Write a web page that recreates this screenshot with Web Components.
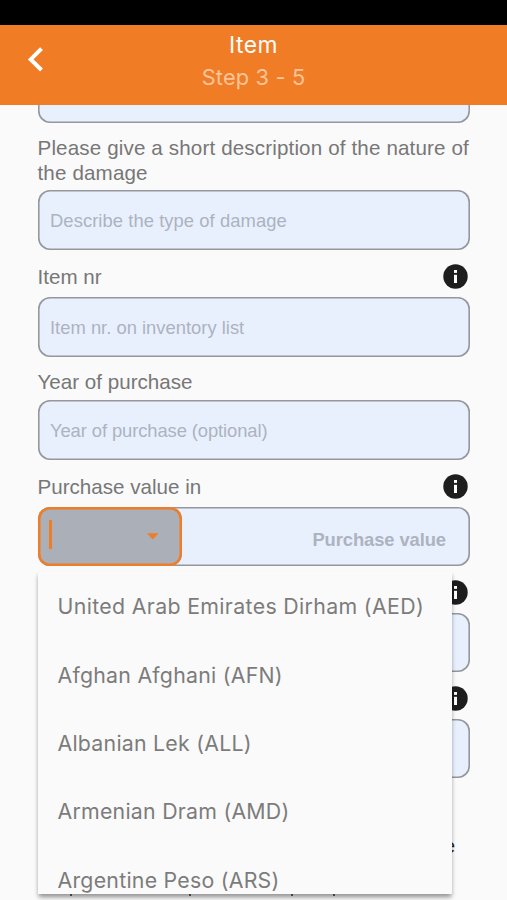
<!DOCTYPE html>
<html lang="en"><head><meta charset="utf-8"><title>Item</title>
<style>
html,body{margin:0;height:900px;overflow:hidden;background:#fafafa}
</style></head><body>
<item-page></item-page>
<script>
class AppBar extends HTMLElement{
  constructor(){super();this.attachShadow({mode:'open'}).innerHTML=`
<style>
:host{display:grid;grid-template-columns:72px 1fr 72px;height:79.5px;margin-top:25px;background:#f07d25;color:#fff;font-family:Inter,sans-serif;position:relative;z-index:3;flex:none}
svg{width:20px;height:28px;margin:20px 0 0 26px}
.t{text-align:center;font-size:22.8px;line-height:32px;padding-top:3.5px;letter-spacing:.5px}
.s{color:#fbc499;font-size:21.8px;letter-spacing:.15px}
.t div{white-space:nowrap}
</style>
<svg viewBox="0 0 20 28"><path d="M15.5 3.6L4.7 14.4L15.5 25" fill="none" stroke="#fff" stroke-width="4"/></svg>
<div class="t"><div><slot name="title"></slot></div><div class="s"><slot name="step"></slot></div></div>`}
}
customElements.define('app-bar',AppBar);

class InfoIcon extends HTMLElement{
  constructor(){super();this.attachShadow({mode:'open'}).innerHTML=`
<style>:host{display:block;width:25px;height:25px}svg{display:block}</style>
<svg width="25" height="25" viewBox="0 0 25 25"><circle cx="12.5" cy="12.5" r="12.2" fill="#1e1e1e"/><rect x="11" y="6" width="3" height="2.9" fill="#fff"/><rect x="11" y="10.8" width="3" height="8.2" fill="#fff"/></svg>`}
}
customElements.define('info-icon',InfoIcon);

class FieldLabel extends HTMLElement{
  constructor(){super();this.attachShadow({mode:'open'}).innerHTML=`
<style>
:host{display:flex;justify-content:space-between;align-items:center;height:25px;color:#777;font:20.6px/25px "Liberation Sans",Arial,sans-serif;letter-spacing:var(--ls,0)}
:host([tall]){height:50px}
info-icon{margin-right:2px;flex:none}
.w{white-space:nowrap}
</style><span class="w"><slot></slot></span>${this.hasAttribute('info')?'<info-icon></info-icon>':''}`}
}
customElements.define('field-label',FieldLabel);

class TextField extends HTMLElement{
  constructor(){super();this.attachShadow({mode:'open'}).innerHTML=`
<style>
:host{display:flex;align-items:center;box-sizing:border-box;height:60px;box-shadow:inset 0 0 0 1.6px #96979a;border-radius:12px;background:#e8f0fe;color:#adb3bf;font:18.4px/24px "Liberation Sans",Arial,sans-serif;padding:2px 12px 0 12.5px;white-space:nowrap;letter-spacing:var(--ls,0)}
:host([amount]){justify-content:flex-end;font-weight:700;padding:7px 24px 0;height:59px}
</style><slot></slot>`}
}
customElements.define('text-field',TextField);

class CurrencySelect extends HTMLElement{
  constructor(){super();this.attachShadow({mode:'open'}).innerHTML=`
<style>
:host{display:flex;align-items:center;justify-content:space-between;box-sizing:border-box;width:144px;height:59px;box-shadow:inset 0 0 0 2.5px #ee7d28;border-radius:12px;background:#abafb8;padding:0 23px 0 11.5px}
i{width:2.5px;height:29px;background:#ee7d28;margin-top:-4px}
svg{display:block}
</style><i></i><svg width="12" height="7" viewBox="0 0 12 7"><path d="M0 .3H11.5L5.75 6.5Z" fill="#ee7d28"/></svg>`}
}
customElements.define('currency-select',CurrencySelect);

class CurrencyMenu extends HTMLElement{
  constructor(){super();this.attachShadow({mode:'open'}).innerHTML=`
<style>
:host{display:block;box-sizing:border-box;width:414px;height:323px;padding-top:1.3px;overflow:hidden;background:#fafafa}
::slotted(div){height:68.4px;line-height:68.4px;padding-left:19.5px;font-family:Inter,sans-serif;font-size:21.3px;color:#7c7c7c;letter-spacing:.25px;white-space:nowrap}
::slotted(div:first-child){letter-spacing:.35px}
</style><slot></slot>`}
}
customElements.define('currency-menu',CurrencyMenu);

class ItemPage extends HTMLElement{
  constructor(){super();this.attachShadow({mode:'open'}).innerHTML=`
<style>
:host{display:flex;flex-direction:column;height:900px;box-sizing:border-box;background:#fafafa;position:relative;overflow:hidden}
:host::before{content:"";position:absolute;left:0;top:0;width:100%;height:25px;background:#000}
main{display:flex;flex-direction:column;padding:0 37px 0 37.5px;margin-top:-42px}
.money{display:grid}
.money>*{grid-area:1/1}
currency-menu{position:absolute;left:38px;top:571px;box-shadow:0 4px 5px -1px rgba(0,0,0,.34),0 3px 4px rgba(0,0,0,.12)}
.behind{position:absolute;left:444px;top:834px;font:20px/24px "Liberation Sans",Arial,sans-serif;color:#222}
.tail{position:absolute;top:894px;width:2px;height:2px;background:#444;z-index:2}
</style>
<app-bar><span slot="title">Item</span><span slot="step">Step 3 - 5</span></app-bar>
<main>
<text-field></text-field>
<field-label tall style="margin-top:12px;--ls:.14px">Please give a short description of the nature of<br>the damage</field-label>
<text-field style="margin-top:5px;--ls:.06px">Describe the type of damage</text-field>
<field-label info style="margin-top:14px">Item nr</field-label>
<text-field style="margin-top:8px">Item nr. on inventory list</text-field>
<field-label style="margin-top:12px">Year of purchase</field-label>
<text-field style="margin-top:6px;--ls:-.1px">Year of purchase (optional)</text-field>
<field-label info style="margin-top:14px">Purchase value in</field-label>
<div class="money" style="margin-top:8px"><text-field amount style="--ls:-.1px">Purchase value</text-field><currency-select></currency-select></div>
<field-label info style="margin-top:14.5px"></field-label>
<text-field amount style="margin-top:8px"></text-field>
<field-label info style="margin-top:14px"></field-label>
<text-field amount style="margin-top:8px"></text-field>
</main>
<span class="behind">e</span>
<currency-menu><div>United Arab Emirates Dirham (AED)</div><div>Afghan Afghani (AFN)</div><div>Albanian Lek (ALL)</div><div>Armenian Dram (AMD)</div><div>Argentine Peso (ARS)</div></currency-menu>
<i class="tail" style="left:70px"></i><i class="tail" style="left:189px"></i><i class="tail" style="left:291px"></i><i class="tail" style="left:333px"></i>`}
}
customElements.define('item-page',ItemPage);
</script></body></html>
